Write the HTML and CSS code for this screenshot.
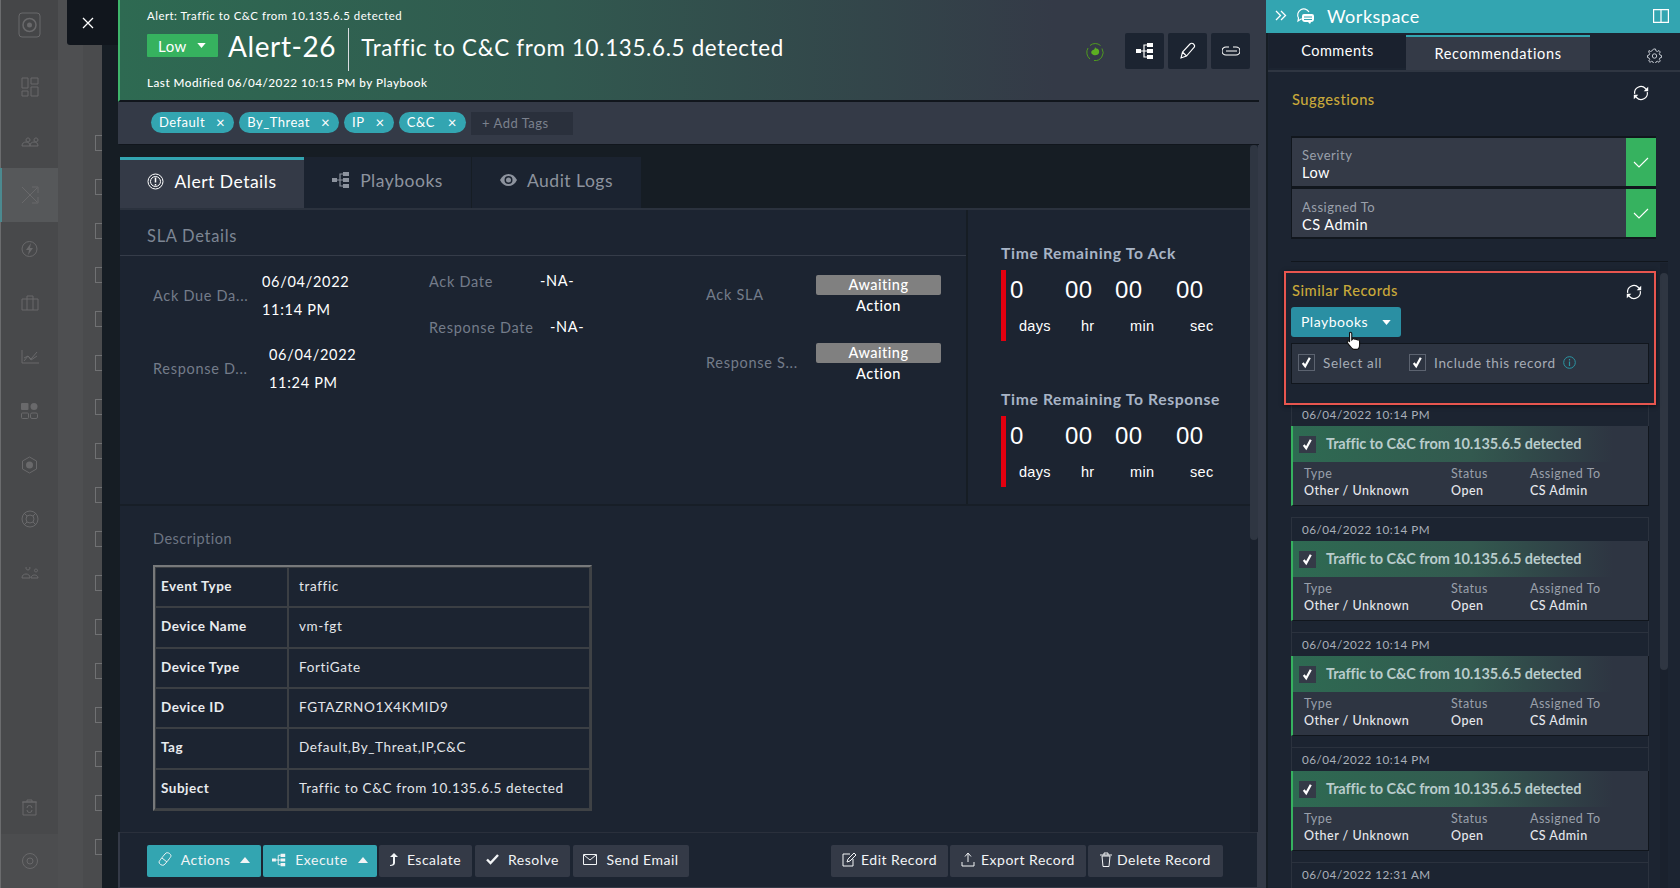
FILE: index.html
```html
<!DOCTYPE html>
<html lang="en">

<head>
    <meta charset="UTF-8">
    <title>Alert-26</title>
    <link rel="stylesheet" href="styles.css">
</head>

<body>
    <svg class="defs" width="0" height="0">
        <symbol id="i-tree" viewBox="0 0 18 18">
            <path fill="currentColor" d="M0 7h5v4H0zM11 1h6v4h-6zM11 7h6v4h-6zM11 13h6v4h-6z" />
            <path fill="none" stroke="currentColor" stroke-width="1.2" d="M5 9h6M8 9V3h3M8 9v6h3" />
        </symbol>
        <symbol id="i-sync" viewBox="0 0 20 20">
            <path fill="none" stroke="currentColor" stroke-width="1.3" d="M3 11a7 7 0 0 1 12-6l2 2M17 9a7 7 0 0 1-12 6l-2-2" />
            <path fill="currentColor" d="M18 3v5h-5zM2 17v-5h5z" />
        </symbol>
        <symbol id="i-tick" viewBox="0 0 16 16">
            <path fill="none" stroke="currentColor" stroke-width="2.4" d="M4 8.5l2.6 3.5L11.5 3" />
        </symbol>
        <symbol id="i-caret" viewBox="0 0 10 6">
            <path fill="currentColor" d="M0 0h10L5 6z" />
        </symbol>
        <symbol id="i-caret-up" viewBox="0 0 10 6">
            <path fill="currentColor" d="M0 6h10L5 0z" />
        </symbol>
    </svg>

    <div class="page">
        <!-- dimmed list page behind the drawer -->
        <div class="backdrop">
            <nav class="sidenav">
                <div class="nav-logo">
                    <svg class="nav-icon" width="24" height="26" viewBox="0 0 24 26"><rect x="1" y="1" width="21" height="24" rx="3" fill="none" stroke="currentColor" /><circle cx="11.5" cy="13" r="6.5" fill="none" stroke="currentColor" stroke-width="1.5" /><circle cx="11.5" cy="13" r="2.5" fill="currentColor" /></svg>
                </div>
                <div class="nav-item"><svg class="nav-icon" width="18" height="20" viewBox="0 0 18 20"><path fill="none" stroke="currentColor" d="M1 1h6v10H1zM10 1h7v6h-7zM1 14h6v5H1zM10 10h7v9h-7z" /></svg></div>
                <div class="nav-item"><svg class="nav-icon" width="18" height="12" viewBox="0 0 18 12"><path fill="none" stroke="currentColor" d="M1 11c0-3 2-4 4-4s4 1 4 4zM9 11c0-3 2-4 4-4s4 1 4 4zM5 5a2 2 0 1 0 0-.1M13 5a2 2 0 1 0 0-.1" /></svg></div>
                <div class="nav-item nav-selected"><svg class="nav-icon" width="18" height="20" viewBox="0 0 18 20"><path fill="none" stroke="currentColor" d="M1 2l15 15M1 18L16 3M11 2h6v6M11 18h6v-6" /></svg></div>
                <div class="nav-item"><svg class="nav-icon" width="17" height="18" viewBox="0 0 17 18"><circle cx="8.500" cy="9" r="7.500" fill="none" stroke="currentColor" /><path fill="currentColor" d="M10 3L5 10h3l-1 5 5-7H9z" /></svg></div>
                <div class="nav-item"><svg class="nav-icon" width="18" height="16" viewBox="0 0 18 16"><path fill="none" stroke="currentColor" d="M1 4h16v11H1zM6 4V1h6v3M6 4v11M12 4v11" /></svg></div>
                <div class="nav-item"><svg class="nav-icon" width="18" height="14" viewBox="0 0 18 14"><path fill="none" stroke="currentColor" d="M1 0v13h17M3 11l4-5 3 3 6-7M3 8l4-2 3 4 6-4" /></svg></div>
                <div class="nav-item"><svg class="nav-icon" width="17" height="16" viewBox="0 0 17 16"><rect x="0" y="0" width="7.500" height="7" rx="1" fill="currentColor" /><circle cx="13" cy="3.500" r="3.500" fill="currentColor" /><rect x=".5" y="10" width="7" height="5.500" rx="1" fill="none" stroke="currentColor" /><rect x="9.500" y="10" width="7" height="5.500" rx="1.500" fill="none" stroke="currentColor" /></svg></div>
                <div class="nav-item"><svg class="nav-icon" width="17" height="18" viewBox="0 0 17 18"><path fill="none" stroke="currentColor" d="M8.500 1l7 4v8l-7 4-7-4V5z" /><circle cx="8.500" cy="9" r="3.500" fill="currentColor" /></svg></div>
                <div class="nav-item"><svg class="nav-icon" width="18" height="18" viewBox="0 0 18 18"><circle cx="9" cy="9" r="8" fill="none" stroke="currentColor" /><circle cx="9" cy="9" r="4" fill="none" stroke="currentColor" /><path stroke="currentColor" d="M3 3l3 3M15 3l-3 3M3 15l3-3M15 15l-3-3" /></svg></div>
                <div class="nav-item"><svg class="nav-icon" width="18" height="12" viewBox="0 0 18 12"><path fill="none" stroke="currentColor" d="M1 11c0-3 2-4 4-4s4 1 4 4zM10 11c0-2 2-3 3.500-3s3.500 1 3.500 3zM7 3a2 2 0 1 0-.1 0M15 5a1.500 1.500 0 1 0-.1 0" /></svg></div>
                <div class="nav-item nav-bottom"><svg class="nav-icon" width="15" height="17" viewBox="0 0 15 17"><path fill="none" stroke="currentColor" d="M1 3h13v13H1zM0 3h15M5 3V1h5v2M5 9a2.500 2.500 0 0 1 5 0M10 11a2.500 2.500 0 0 1-5 0" /></svg></div>
                <div class="nav-item nav-last"><svg class="nav-icon" width="16" height="16" viewBox="0 0 16 16"><circle cx="8" cy="8" r="7.500" fill="none" stroke="currentColor" /><circle cx="8" cy="8" r="3" fill="none" stroke="currentColor" /></svg></div>
            </nav>
            <div class="list-gutter"></div>
            <div class="list-checks">
                <span class="ghost-check"></span><span class="ghost-check"></span><span class="ghost-check"></span>
                <span class="ghost-check"></span><span class="ghost-check"></span><span class="ghost-check"></span>
                <span class="ghost-check"></span><span class="ghost-check"></span><span class="ghost-check"></span>
                <span class="ghost-check"></span><span class="ghost-check"></span><span class="ghost-check"></span>
                <span class="ghost-check"></span><span class="ghost-check"></span><span class="ghost-check"></span>
                <span class="ghost-check"></span><span class="ghost-check"></span>
            </div>
            <div class="drawer-edge"></div>
            <button class="close-btn">
                <svg width="14" height="14" viewBox="0 0 14 14"><path stroke="#fff" stroke-width="1.3" d="M2 2l10 10M12 2L2 12" /></svg>
            </button>
        </div>

        <!-- record drawer -->
        <main class="record">
            <header class="record-head">
                <div class="head-text">
                    <div class="head-sub">Alert: Traffic to C&amp;C from 10.135.6.5 detected</div>
                    <div class="head-title">
                        <span class="severity">Low <svg width="9" height="5"><use href="#i-caret" /></svg></span>
                        <span class="record-id">Alert-26</span>
                        <span class="record-name">Traffic to C&amp;C from 10.135.6.5 detected</span>
                    </div>
                    <div class="head-mod">Last Modified 06/04/2022 10:15 PM by Playbook</div>
                </div>
                <div class="head-actions">
                    <svg class="pulse" width="18" height="20" viewBox="0 0 18 20"><path fill="none" stroke="#4f9a1f" d="M4 3.500a8 8 0 0 1 10.500 0M2 6a8.500 8.500 0 0 0 2 11M8 18.500a8 8 0 0 0 8-12" /><path fill="#5cb021" d="M9 5l1 1.500c3 0 3.500 2.500 3 4.500-1 2.500-5 3-7 1-1.500-1.500-.5-3.500 1-4 1 0 2-1 2-3z" /></svg>
                    <button class="icon-btn"><svg width="18" height="18"><use href="#i-tree" /></svg></button>
                    <button class="icon-btn"><svg width="18" height="18" viewBox="0 0 18 18"><path fill="none" stroke="currentColor" stroke-width="1.100" d="M2 16l1.500-6L11 2c1-1 2.500-1 3.500 0s1.500 2.500.5 3.500L7.500 14zM3.500 10l4 4" /></svg></button>
                    <button class="icon-btn"><svg width="18" height="10" viewBox="0 0 18 10"><path fill="none" stroke="currentColor" stroke-width="1.100" d="M7 1H4a4 4 0 0 0 0 8h10a4 4 0 0 0 0-8h-3M4 5h11" /></svg></button>
                </div>
            </header>

            <div class="tag-bar">
                <span class="tag">Default <i>×</i></span>
                <span class="tag">By_Threat <i>×</i></span>
                <span class="tag">IP <i>×</i></span>
                <span class="tag">C&amp;C <i>×</i></span>
                <span class="tag-input">+ Add Tags</span>
            </div>

            <div class="record-scroll">
                <div class="record-body">
                    <div class="tabs">
                        <div class="tab tab-active">
                            <svg width="17" height="17" viewBox="0 0 17 17"><circle cx="8.500" cy="8.500" r="7.500" fill="none" stroke="currentColor" /><circle cx="8.500" cy="8.500" r="5" fill="none" stroke="currentColor" /><path stroke="currentColor" stroke-width="1.500" d="M8.500 4.500v5M8.500 11v1.500" /></svg>
                            Alert Details
                        </div>
                        <div class="tab tab-playbooks"><svg width="18" height="18"><use href="#i-tree" /></svg> Playbooks</div>
                        <div class="tab tab-audit">
                            <svg width="17" height="12" viewBox="0 0 17 12"><path fill="currentColor" d="M0 6c2-4 5-6 8.500-6S15 2 17 6c-2 4-5 6-8.500 6S2 10 0 6zm8.500 4a4 4 0 1 0 0-8 4 4 0 0 0 0 8z" /><circle cx="8.500" cy="6" r="2.500" fill="currentColor" /></svg>
                            Audit Logs
                        </div>
                    </div>

                    <div class="sla-row">
                        <section class="sla-details">
                            <h2 class="sla-title">SLA Details</h2>
                            <div class="sla-columns">
                                <div class="sla-col sla-col-dates">
                                    <div class="sla-item">
                                        <span class="field-label label-ack">Ack Due Da...</span>
                                        <span class="field-value value-two">06/04/2022<br>11:14 PM</span>
                                    </div>
                                    <div class="sla-item sla-item-second">
                                        <span class="field-label label-resp">Response D...</span>
                                        <span class="field-value value-two">06/04/2022<br>11:24 PM</span>
                                    </div>
                                </div>
                                <div class="sla-col sla-col-actual">
                                    <div class="sla-line">
                                        <span class="field-label label-ackdate">Ack Date</span>
                                        <span class="field-value">-NA-</span>
                                    </div>
                                    <div class="sla-line">
                                        <span class="field-label label-respdate">Response Date</span>
                                        <span class="field-value">-NA-</span>
                                    </div>
                                </div>
                                <div class="sla-col sla-col-status">
                                    <div class="sla-status">
                                        <span class="field-label label-status">Ack SLA</span>
                                        <span class="status-pill"><b>Awaiting</b><b>Action</b></span>
                                    </div>
                                    <div class="sla-status">
                                        <span class="field-label label-status">Response S...</span>
                                        <span class="status-pill"><b>Awaiting</b><b>Action</b></span>
                                    </div>
                                </div>
                            </div>
                        </section>
                        <section class="timers">
                            <h3 class="timer-title">Time Remaining To Ack</h3>
                            <div class="timer">
                                <div class="unit"><strong>0</strong><span>days</span></div>
                                <div class="unit"><strong>00</strong><span>hr</span></div>
                                <div class="unit"><strong>00</strong><span>min</span></div>
                                <div class="unit"><strong>00</strong><span>sec</span></div>
                            </div>
                            <h3 class="timer-title timer-title-second">Time Remaining To Response</h3>
                            <div class="timer">
                                <div class="unit"><strong>0</strong><span>days</span></div>
                                <div class="unit"><strong>00</strong><span>hr</span></div>
                                <div class="unit"><strong>00</strong><span>min</span></div>
                                <div class="unit"><strong>00</strong><span>sec</span></div>
                            </div>
                        </section>
                    </div>

                    <section class="description">
                        <div class="desc-label">Description</div>
                        <table class="desc-table">
                            <tr><th>Event Type</th><td>traffic</td></tr>
                            <tr><th>Device Name</th><td>vm-fgt</td></tr>
                            <tr><th>Device Type</th><td>FortiGate</td></tr>
                            <tr><th>Device ID</th><td>FGTAZRNO1X4KMID9</td></tr>
                            <tr><th>Tag</th><td>Default,By_Threat,IP,C&amp;C</td></tr>
                            <tr><th>Subject</th><td>Traffic to C&amp;C from 10.135.6.5 detected</td></tr>
                        </table>
                    </section>
                </div>
                <div class="vscroll"><div class="vscroll-thumb"></div></div>
            </div>

            <footer class="record-foot">
                <div class="foot-group">
                    <button class="btn btn-teal btn-actions">
                        <svg width="14" height="15" viewBox="0 0 14 15"><path fill="none" stroke="currentColor" d="M8 1c2-1 5 1 5 3 0 1-5 7-7 9-2 1-5-1-5-3 0-1 5-7 7-9zM4 6l5 4" /></svg>
                        Actions <svg class="btn-caret" width="10" height="6"><use href="#i-caret-up" /></svg>
                    </button>
                    <button class="btn btn-teal btn-execute"><svg width="14" height="14"><use href="#i-tree" /></svg> Execute <svg class="btn-caret" width="10" height="6"><use href="#i-caret-up" /></svg></button>
                    <button class="btn btn-escalate"><svg width="8" height="13" viewBox="0 0 8 13"><path fill="currentColor" d="M4 0l4 4H5v6c0 2-2 3-5 3v-1c2 0 3-1 3-2V4H0z" /></svg> Escalate</button>
                    <button class="btn btn-resolve"><svg width="13" height="11" viewBox="0 0 13 11"><path fill="none" stroke="currentColor" stroke-width="2.400" d="M1 5.500l3.500 3.500L12 1" /></svg> Resolve</button>
                    <button class="btn btn-email"><svg width="14" height="11" viewBox="0 0 14 11"><path fill="none" stroke="currentColor" d="M.5.500h13v10H.5zM1 1l6 5 6-5" /></svg> Send Email</button>
                </div>
                <div class="foot-group">
                    <button class="btn btn-edit"><svg width="14" height="15" viewBox="0 0 14 15"><path fill="none" stroke="currentColor" d="M8 2H1v12h10V7M5 10l1-3 6-6 2 2-6 6z" /></svg> Edit Record</button>
                    <button class="btn btn-export"><svg width="14" height="15" viewBox="0 0 14 15"><path fill="none" stroke="currentColor" d="M7 10V2M4 4.500L7 1l3 3.500M1 10v4h12v-4" /></svg> Export Record</button>
                    <button class="btn btn-delete"><svg width="12" height="15" viewBox="0 0 12 15"><path fill="none" stroke="currentColor" d="M2 4h8l-1 10.500H3zM0 3h12M4 3V1h4v2" /></svg> Delete Record</button>
                </div>
            </footer>
        </main>

        <!-- workspace side panel -->
        <aside class="workspace">
            <div class="ws-head">
                <svg class="ws-collapse" width="12" height="11" viewBox="0 0 12 11"><path fill="none" stroke="#fff" stroke-width="1.300" d="M1 1l4.500 4.500L1 10M6 1l4.500 4.500L6 10" /></svg>
                <svg class="ws-chat" width="18" height="17" viewBox="0 0 18 17"><path fill="none" stroke="#fff" stroke-width="1.200" d="M7 12H5l-3 2 .5-3A5.500 5.500 0 1 1 13 5" /><path fill="#fff" d="M8 7h8a2 2 0 0 1 2 2v3a3 3 0 0 1-3 3l-1 2-2-2H9a3 3 0 0 1-3-3V9a2 2 0 0 1 2-2z" /><path stroke="#33a5b1" d="M8 10h8M8 12.500h8" /></svg>
                <span class="ws-title">Workspace</span>
                <svg class="ws-split" width="16" height="14" viewBox="0 0 16 14"><path fill="none" stroke="#fff" stroke-width="1.200" d="M.6.600h14.800v12.800H.6zM8 .6v12.800" /></svg>
            </div>
            <div class="ws-tabs">
                <div class="ws-tab">Comments</div>
                <div class="ws-tab ws-tab-active">Recommendations</div>
                <svg class="ws-gear" width="15" height="15" viewBox="0 0 15 15"><path fill="none" stroke="currentColor" d="M6.500 1h2l.4 1.800 1.500.7 1.600-1 1.300 1.500-1 1.500.6 1.500 1.600.5v2l-1.600.4-.6 1.500 1 1.500-1.300 1.400-1.600-1-1.500.7-.4 1.500h-2l-.4-1.500-1.500-.7-1.600 1L1.700 13l1-1.500-.6-1.500L.5 9.500v-2l1.600-.5.600-1.500-1-1.500L2 2.500l1.600 1 1.500-.7z" /><circle cx="7.500" cy="8" r="2.200" fill="none" stroke="currentColor" /></svg>
            </div>
            <div class="ws-scroll">
                <div class="ws-content">
                    <div class="ws-section-head">
                        <span class="ws-section-title">Suggestions</span>
                        <svg class="ws-sync" width="18" height="18"><use href="#i-sync" /></svg>
                    </div>
                    <div class="suggest">
                        <div class="suggest-text"><span>Severity</span><b>Low</b></div>
                        <div class="suggest-ok"><svg width="16" height="16" viewBox="0 0 16 16"><path fill="none" stroke="#fff" stroke-width="1.100" d="M1 8l5 5L15 4" /></svg></div>
                    </div>
                    <div class="suggest suggest-second">
                        <div class="suggest-text"><span>Assigned To</span><b>CS Admin</b></div>
                        <div class="suggest-ok"><svg width="16" height="16" viewBox="0 0 16 16"><path fill="none" stroke="#fff" stroke-width="1.100" d="M1 8l5 5L15 4" /></svg></div>
                    </div>
                    <div class="ws-rule"></div>

                    <div class="similar">
                        <div class="ws-section-head similar-head">
                            <span class="ws-section-title">Similar Records</span>
                            <svg class="similar-sync" width="18" height="18"><use href="#i-sync" /></svg>
                        </div>
                        <button class="pick-btn">Playbooks <svg width="9" height="5"><use href="#i-caret" /></svg></button>
                        <svg class="hand" width="16" height="20" viewBox="0 0 14 18"><path fill="#fff" stroke="#111" stroke-width="1" d="M3 1.500c1-.8 2 0 2 1V8l1-1c1-.5 1.500 0 2 .5 1-.5 1.500 0 2 .5 1-.3 2 .3 2 1.500v3c0 2-1 4-3 4H7c-2 0-3-2-6-6-.5-1 .5-2 1.500-1.500L3 10z" /></svg>
                        <div class="select-box">
                            <span class="check"><svg width="15" height="15"><use href="#i-tick" /></svg></span>
                            <span class="select-label">Select all</span>
                            <span class="check check-second"><svg width="15" height="15"><use href="#i-tick" /></svg></span>
                            <span class="select-label">Include this record</span>
                            <svg class="info" width="13" height="13" viewBox="0 0 13 13"><circle cx="6.500" cy="6.500" r="5.800" fill="none" stroke="#2b95a3" /><path stroke="#2b95a3" stroke-width="1.200" d="M6.500 5.500v4.500M6.500 3v1.400" /></svg>
                        </div>
                    </div>

                    <div class="rec rec-first">
                        <div class="rec-date">06/04/2022 10:14 PM</div>
                        <div class="rec-card">
                            <div class="rec-title"><span class="rec-check"><svg width="15" height="15"><use href="#i-tick" /></svg></span>Traffic to C&amp;C from 10.135.6.5 detected</div>
                            <div class="rec-fields">
                                <div class="rec-field rec-type"><span>Type</span><b>Other / Unknown</b></div>
                                <div class="rec-field rec-status"><span>Status</span><b>Open</b></div>
                                <div class="rec-field"><span>Assigned To</span><b>CS Admin</b></div>
                            </div>
                        </div>
                    </div>
                    <div class="rec">
                        <div class="rec-date">06/04/2022 10:14 PM</div>
                        <div class="rec-card">
                            <div class="rec-title"><span class="rec-check"><svg width="15" height="15"><use href="#i-tick" /></svg></span>Traffic to C&amp;C from 10.135.6.5 detected</div>
                            <div class="rec-fields">
                                <div class="rec-field rec-type"><span>Type</span><b>Other / Unknown</b></div>
                                <div class="rec-field rec-status"><span>Status</span><b>Open</b></div>
                                <div class="rec-field"><span>Assigned To</span><b>CS Admin</b></div>
                            </div>
                        </div>
                    </div>
                    <div class="rec">
                        <div class="rec-date">06/04/2022 10:14 PM</div>
                        <div class="rec-card">
                            <div class="rec-title"><span class="rec-check"><svg width="15" height="15"><use href="#i-tick" /></svg></span>Traffic to C&amp;C from 10.135.6.5 detected</div>
                            <div class="rec-fields">
                                <div class="rec-field rec-type"><span>Type</span><b>Other / Unknown</b></div>
                                <div class="rec-field rec-status"><span>Status</span><b>Open</b></div>
                                <div class="rec-field"><span>Assigned To</span><b>CS Admin</b></div>
                            </div>
                        </div>
                    </div>
                    <div class="rec">
                        <div class="rec-date">06/04/2022 10:14 PM</div>
                        <div class="rec-card">
                            <div class="rec-title"><span class="rec-check"><svg width="15" height="15"><use href="#i-tick" /></svg></span>Traffic to C&amp;C from 10.135.6.5 detected</div>
                            <div class="rec-fields">
                                <div class="rec-field rec-type"><span>Type</span><b>Other / Unknown</b></div>
                                <div class="rec-field rec-status"><span>Status</span><b>Open</b></div>
                                <div class="rec-field"><span>Assigned To</span><b>CS Admin</b></div>
                            </div>
                        </div>
                    </div>
                    <div class="rec">
                        <div class="rec-date">06/04/2022 12:31 AM</div>
                    </div>
                </div>
                <div class="ws-vscroll"><div class="ws-thumb"></div></div>
            </div>
        </aside>
    </div>
</body>

</html>
```

FILE: styles.css
```css
* {
    box-sizing: border-box;
}

html,
body {
    margin: 0;
    height: 100%;
    overflow: hidden;
}

body {
    font-family: "Lato", sans-serif;
    background-color: #1c2431;
    color: #fff;
    letter-spacing: 0.5px;
}

button {
    font: inherit;
    letter-spacing: inherit;
    color: inherit;
    border: none;
}

h2,
h3 {
    margin: 0;
    font-weight: normal;
}

.defs {
    position: absolute;
}

.page {
    display: flex;
    width: 1680px;
    height: 888px;
}

/* Dimmed page behind the drawer */
.backdrop {
    position: relative;
    display: flex;
    flex: none;
    width: 118px;
    height: 888px;
    background-color: #4e4f51;
}

.sidenav {
    display: flex;
    flex-direction: column;
    width: 58px;
    height: 888px;
    background-color: #48494b;
    border-left: 1px solid #6b6c6e;
    color: #69696b;
}

.nav-logo {
    display: flex;
    align-items: center;
    justify-content: center;
    height: 60px;
    padding-bottom: 10px;
    background-color: #454648;
}

.nav-item {
    display: flex;
    align-items: center;
    justify-content: center;
    height: 54px;
    flex: none;
}

.nav-selected {
    background-color: #56585a;
    border-left: 2px solid #4b8a90;
    margin-left: -1px;
}

.nav-bottom {
    margin-top: auto;
}

.nav-last {
    background-color: #4c4d4f;
}

.list-gutter {
    width: 25px;
}

.list-checks {
    display: flex;
    flex-direction: column;
    gap: 28px;
    width: 19px;
    padding: 135px 0 0 12px;
    background-color: #4a4b4d;
    overflow: hidden;
}

.ghost-check {
    flex: none;
    width: 10px;
    height: 16px;
    border: 1px solid #707173;
    border-right: none;
}

.drawer-edge {
    width: 16px;
    background-color: #161d24;
}

.close-btn {
    position: absolute;
    left: 67px;
    top: 0;
    width: 51px;
    height: 45px;
    padding: 0 9px 0 0;
    background-color: #11161d;
    border-bottom-left-radius: 3px;
    display: flex;
    align-items: center;
    justify-content: center;
}

/* Record drawer */
.record {
    display: flex;
    flex-direction: column;
    flex: none;
    width: 1148px;
    height: 888px;
    padding-right: 7px;
    background-color: #343a47;
}

.record-head {
    display: flex;
    justify-content: space-between;
    height: 102px;
    padding: 8px 9px 0 27px;
    background: linear-gradient(90deg, #2e6a52 0%, #31594f 38%, #343a47 82%);
    border-left: 2px solid #3fb56b;
    border-bottom: 2px solid #11161d;
}

.head-sub {
    height: 16px;
    font-size: 11.4px;
    line-height: 16px;
}

.head-title {
    display: flex;
    align-items: center;
    height: 43px;
    margin-top: 4px;
}

.severity {
    display: flex;
    align-items: center;
    justify-content: space-between;
    width: 71px;
    height: 23px;
    margin-top: -8px;
    padding: 0 12px 0 11px;
    background-color: #36b25f;
    border-radius: 1px;
    font-size: 15px;
}

.severity svg {
    fill: #fff;
}

.record-id {
    margin-left: 10px;
    padding: 0 12px 6px 0;
    font-size: 28px;
    line-height: 37px;
    border-right: 1px solid #d8dde0;
    letter-spacing: 0.6px;
}

.record-name {
    margin: -4px 0 0 12px;
    font-size: 22.3px;
    letter-spacing: 0.7px;
}

.head-mod {
    height: 16px;
    margin-top: 3px;
    font-size: 11.7px;
    line-height: 16px;
    font-weight: 500;
}

.head-actions {
    display: flex;
    align-items: center;
    gap: 4px;
    height: 36px;
    margin-top: 25px;
}

.pulse {
    margin-right: 17px;
    margin-top: 1px;
}

.icon-btn {
    display: flex;
    align-items: center;
    justify-content: center;
    width: 39px;
    height: 36px;
    padding: 0;
    background-color: #1c2431;
    border-radius: 2px;
}

.tag-bar {
    display: flex;
    align-items: flex-start;
    gap: 5px;
    height: 43px;
    padding: 10px 0 0 33px;
}

.tag {
    display: flex;
    align-items: center;
    justify-content: space-between;
    height: 21px;
    padding: 0 9px 2px 8px;
    gap: 11px;
    background-color: #33a5b1;
    border-radius: 11px;
    font-size: 13px;
}

.tag:nth-child(4) {
    gap: 13px;
}

.tag i {
    font-style: normal;
    font-size: 15px;
}

.tag-input {
    display: flex;
    align-items: center;
    width: 102px;
    height: 23px;
    padding: 0 0 1px 11px;
    background-color: #2a303c;
    color: #7b818d;
    font-size: 13px;
}

.record-scroll {
    display: flex;
    flex: none;
    height: 688px;
    border-top: 1px solid #11161d;
    margin-top: -1px;
    border-left: 2px solid #161d24;
}

.record-body {
    width: 1130px;
    flex: none;
    overflow: hidden;
    background-color: #1c2431;
}

.tabs {
    display: flex;
    height: 65px;
    padding-top: 12px;
    background-color: #161d24;
    border-bottom: 2px solid #2b323e;
}

.tab {
    display: flex;
    align-items: center;
    justify-content: center;
    height: 51px;
    gap: 10px;
    padding-bottom: 5px;
    background-color: #1b2330;
    color: #8d939e;
    font-size: 17.5px;
}

.tab-active {
    width: 184px;
    background-color: #343a47;
    border-top: 3px solid #33a5b1;
    color: #fff;
}

.tab-playbooks {
    width: 167px;
}

.tab-audit {
    width: 169px;
    margin-left: 1px;
}

.sla-row {
    display: flex;
    height: 294px;
}

.sla-details {
    width: 846px;
    flex: none;
}

.sla-title {
    height: 46px;
    padding: 16px 0 0 27px;
    font-size: 16.5px;
    line-height: 20px;
    color: #7d8694;
    border-bottom: 1px solid #353c49;
    letter-spacing: 0.7px;
}

.sla-columns {
    display: flex;
    padding-left: 33px;
}

.sla-col {
    flex: none;
}

.sla-col-dates {
    width: 276px;
    padding-top: 12px;
}

.sla-col-actual {
    width: 277px;
    padding-top: 15px;
}

.sla-col-status {
    padding-top: 19px;
}

.field-label {
    color: #747c8a;
    font-size: 14.5px;
    white-space: nowrap;
    letter-spacing: 0.7px;
}

.field-value {
    font-size: 14.5px;
    line-height: 20px;
    white-space: nowrap;
    letter-spacing: 0.7px;
}

.sla-item {
    display: flex;
    align-items: center;
    height: 56px;
}

.sla-item .field-label {
    margin-top: -1px;
}

.sla-item-second {
    margin-top: 17px;
}

.label-ack {
    width: 109px;
}

.label-resp {
    width: 116px;
}

.value-two {
    line-height: 28px;
}

.sla-line {
    display: flex;
    align-items: center;
    height: 20px;
    margin-bottom: 26px;
}

.label-ackdate {
    width: 111px;
}

.label-respdate {
    width: 121px;
}

.sla-status {
    display: flex;
    margin-bottom: 21px;
    height: 47px;
}

.label-status {
    width: 110px;
    line-height: 39px;
}

.status-pill {
    display: flex;
    flex-direction: column;
    width: 125px;
    font-size: 14.5px;
    text-align: center;
}

.status-pill b {
    font-weight: 500;
    height: 20px;
    line-height: 20px;
}

.status-pill b:first-child {
    background-color: #808080;
    border-radius: 2px;
    margin-bottom: 1px;
}

.timers {
    flex: 1;
    padding: 33px 0 0 33px;
    border-left: 2px solid #161d24;
}

.timer-title {
    height: 20px;
    font-size: 15.7px;
    line-height: 20px;
    font-weight: 700;
    color: #a8b4c6;
    letter-spacing: 0.65px;
}

.timer-title-second {
    margin-top: 48px;
}

.timer {
    display: flex;
    height: 71px;
    margin-top: 7px;
    padding-left: 4px;
    border-left: 5px solid #e3000f;
    font-family: "Liberation Sans", sans-serif;
    letter-spacing: 0.3px;
}

.unit {
    display: flex;
    flex-direction: column;
    width: 55px;
}

.unit:nth-child(2) {
    width: 50px;
}

.unit:nth-child(3) {
    width: 61px;
}

.unit:nth-child(4) {
    width: 60px;
}

.unit strong {
    font-weight: normal;
    font-size: 24px;
    line-height: 28px;
    height: 28px;
    margin-top: 6px;
}

.unit span {
    margin-top: 13px;
    font-size: 14.5px;
    line-height: 18px;
    padding-left: 9px;
}

.unit:nth-child(2) span {
    padding-left: 16px;
}

.unit:nth-child(3) span {
    padding-left: 15px;
}

.unit:nth-child(4) span {
    padding-left: 14px;
}

.description {
    height: 329px;
    padding: 24px 0 0 33px;
    border-top: 2px solid #171e27;
}

.desc-label {
    height: 18px;
    font-size: 14.5px;
    line-height: 18px;
    color: #6d7583;
}

.desc-table {
    width: 439px;
    height: 246px;
    margin-top: 17px;
    border-collapse: separate;
    border-spacing: 0;
    border: 2px solid;
    border-color: #77797b #3f4245 #3f4245 #77797b;
    font-size: 13.5px;
    letter-spacing: 0.65px;
}

.desc-table th,
.desc-table td {
    padding-bottom: 3px;
    border: 1px solid #3b3f44;
    text-align: left;
}

.desc-table th {
    width: 133px;
    padding-left: 5px;
    font-weight: 700;
    color: #e9ecef;
    letter-spacing: 0.5px;
}

.desc-table td {
    padding-left: 10px;
    color: #e3e6ea;
}

.vscroll {
    width: 8px;
    background-color: #1a212d;
}

.vscroll-thumb {
    height: 395px;
    background-color: #2f3642;
    border-radius: 4px;
}

.record-foot {
    display: flex;
    justify-content: space-between;
    flex: none;
    height: 55px;
    margin-left: 2px;
    margin-right: 2px;
    padding: 12px 34px 0 27px;
    background-color: #1c2431;
    border-top: 1px solid #2a303c;
}

.foot-group {
    display: flex;
    gap: 2px;
}

.btn {
    display: flex;
    align-items: center;
    justify-content: center;
    gap: 9px;
    height: 32px;
    padding: 0 0 3px;
    background-color: #343a47;
    border-radius: 2px;
    font-size: 14px;
    color: #f2f4f6;
}

.btn-teal {
    background-color: #33a5b1;
}

.btn-caret {
    margin-left: 1px;
}

.btn-actions {
    width: 114px;
}

.btn-execute {
    width: 114px;
}

.btn-escalate {
    width: 93px;
}

.btn-resolve {
    width: 95px;
    margin-left: 1px;
}

.btn-email {
    width: 116px;
    margin-left: 1px;
}

.btn-edit {
    width: 117px;
    gap: 5px;
}

.btn-export {
    width: 136px;
    gap: 6px;
}

.btn-delete {
    width: 135px;
    gap: 5px;
}

/* Workspace panel */
.workspace {
    display: flex;
    flex-direction: column;
    flex: none;
    width: 414px;
    height: 888px;
    overflow: hidden;
    background-color: #1c2431;
}

.ws-head {
    display: flex;
    align-items: center;
    flex: none;
    height: 33px;
    padding: 0 11px 2px 9px;
    background-color: #33a5b1;
}

.ws-chat {
    margin-left: 9px;
}

.ws-title {
    margin-left: 13px;
    font-size: 18px;
}

.ws-split {
    margin-left: auto;
}

.ws-tabs {
    display: flex;
    flex: none;
    height: 39px;
    padding: 2px 0 0 1px;
    margin-left: 2px;
    position: relative;
    border-bottom: 2px solid #2f3642;
}

.ws-scroll,
.ws-tabs {
    box-shadow: -2px 0 0 #161d24;
}

.ws-tab {
    display: flex;
    align-items: center;
    justify-content: center;
    width: 137px;
    height: 33px;
    padding-bottom: 2px;
    background-color: #1a212e;
    font-size: 14.5px;
}

.ws-tab-active {
    width: 184px;
    height: 35px;
    padding-bottom: 0;
    background-color: #343a47;
    border-top: 2px solid #33a5b1;
    letter-spacing: 0.65px;
}

.ws-gear {
    margin: 13px 0 0 57px;
    color: #c3c8d0;
}

.ws-scroll {
    display: flex;
    flex: 1;
    min-height: 0;
    margin-left: 2px;
}

.ws-content {
    width: 392px;
    flex: none;
}

.ws-section-head {
    display: flex;
    align-items: center;
    justify-content: space-between;
    height: 20px;
    margin: 17px 0 27px 24px;
    padding-right: 10px;
}

.ws-section-title {
    color: #c9a93a;
    font-size: 14.7px;
    font-weight: 500;
}

.ws-sync {
    margin-top: -12px;
}

.suggest {
    display: flex;
    width: 365px;
    height: 52px;
    margin: 0 0 -1px 23px;
    background-color: #343a47;
    border: 2px solid #11161d;
    border-left-width: 1px;
    border-right-width: 0;
}

.suggest-text {
    display: flex;
    flex-direction: column;
    flex: 1;
    padding: 8px 0 0 10px;
}

.suggest-second .suggest-text {
    padding-top: 9px;
}

.suggest-text span {
    height: 18px;
    font-size: 13px;
    line-height: 18px;
    color: #9aa0ab;
}

.suggest-text b {
    font-weight: normal;
    font-size: 14.5px;
    line-height: 17px;
}

.suggest-ok {
    display: flex;
    align-items: center;
    justify-content: center;
    width: 30px;
    background-color: #36b25f;
}

.ws-rule {
    height: 1px;
    margin: 23px 0 0 23px;
    background-color: #11161d;
    width: 377px;
}

.similar {
    position: relative;
    z-index: 1;
    width: 372px;
    height: 134px;
    margin: 9px 0 0 16px;
    padding: 0 5px;
    background-color: #1c2431;
    border: 2px solid #e8564f;
    box-shadow: 0 1px 4px rgba(0, 0, 0, 0.6);
}

.similar-head {
    margin: 7px 0 7px 1px;
    padding-right: 6px;
}

.similar-sync {
    margin-top: 4px;
}

.pick-btn {
    display: flex;
    align-items: center;
    justify-content: space-between;
    width: 110px;
    height: 30px;
    padding: 0 10px 2px 10px;
    background-color: #2a8fa3;
    border-radius: 3px;
    font-size: 14px;
}

.pick-btn svg {
    fill: #fff;
    margin-top: 3px;
}

.hand {
    position: absolute;
    left: 60px;
    top: 58px;
    z-index: 2;
}

.select-box {
    display: flex;
    align-items: center;
    width: 358px;
    height: 41px;
    margin-top: 6px;
    padding: 0 0 2px 6px;
    background-color: #2d3441;
    border: 1px solid #11161d;
    font-size: 13.5px;
    color: #a6acb6;
    letter-spacing: 0.65px;
}

.check {
    display: flex;
    align-items: center;
    justify-content: center;
    width: 17px;
    height: 17px;
    margin-right: 8px;
    border: 1px solid #5c6370;
    color: #fff;
}

.check-second {
    margin-left: 27px;
}

.info {
    margin-left: 7px;
}

.rec {
    width: 358px;
    height: 115px;
    margin-left: 23px;
    border: 1px solid #2b323e;
    border-bottom: none;
}

.rec-first {
    height: 100px;
    margin-bottom: 12px;
    border-top: none;
}

.rec-date {
    height: 23px;
    padding: 2px 0 0 10px;
    font-size: 11.7px;
    line-height: 18px;
    color: #aab0ba;
}

.rec-first .rec-date {
    height: 21px;
    padding-top: 0;
}

.rec-card {
    width: 358px;
    height: 80px;
    margin-left: -1px;
    background-color: #2e3542;
    border-left: 2px solid #36b25f;
    border-bottom: 1px solid #11161d;
    border-right: 1px solid #11161d;
}

.rec-title {
    display: flex;
    align-items: center;
    height: 36px;
    padding: 0 0 2px 6px;
    background: linear-gradient(90deg, #2e6a52 0%, #33594f 50%, #2e3542 90%);
    color: #b9cccc;
    font-size: 14.5px;
    font-weight: 700;
    letter-spacing: -0.1px;
}

.rec-check {
    display: flex;
    align-items: center;
    justify-content: center;
    width: 17px;
    height: 17px;
    margin: 2px 10px 0 0;
    background-color: #343a47;
    color: #fff;
}

.rec-fields {
    display: flex;
    padding: 4px 0 0 11px;
}

.rec-field {
    display: flex;
    flex-direction: column;
    font-size: 12.5px;
    line-height: 16px;
}

.rec-field span {
    color: #9aa0ab;
}

.rec-field b {
    font-weight: 500;
    margin-top: 1px;
    color: #e6e8ec;
}

.rec-type {
    width: 147px;
}

.rec-status {
    width: 79px;
}

.ws-vscroll {
    width: 8px;
    margin-top: 191px;
    background-color: #1a212d;
}

.ws-thumb {
    height: 397px;
    margin-top: 10px;
    background-color: #2f3642;
    border-radius: 4px;
}
```
